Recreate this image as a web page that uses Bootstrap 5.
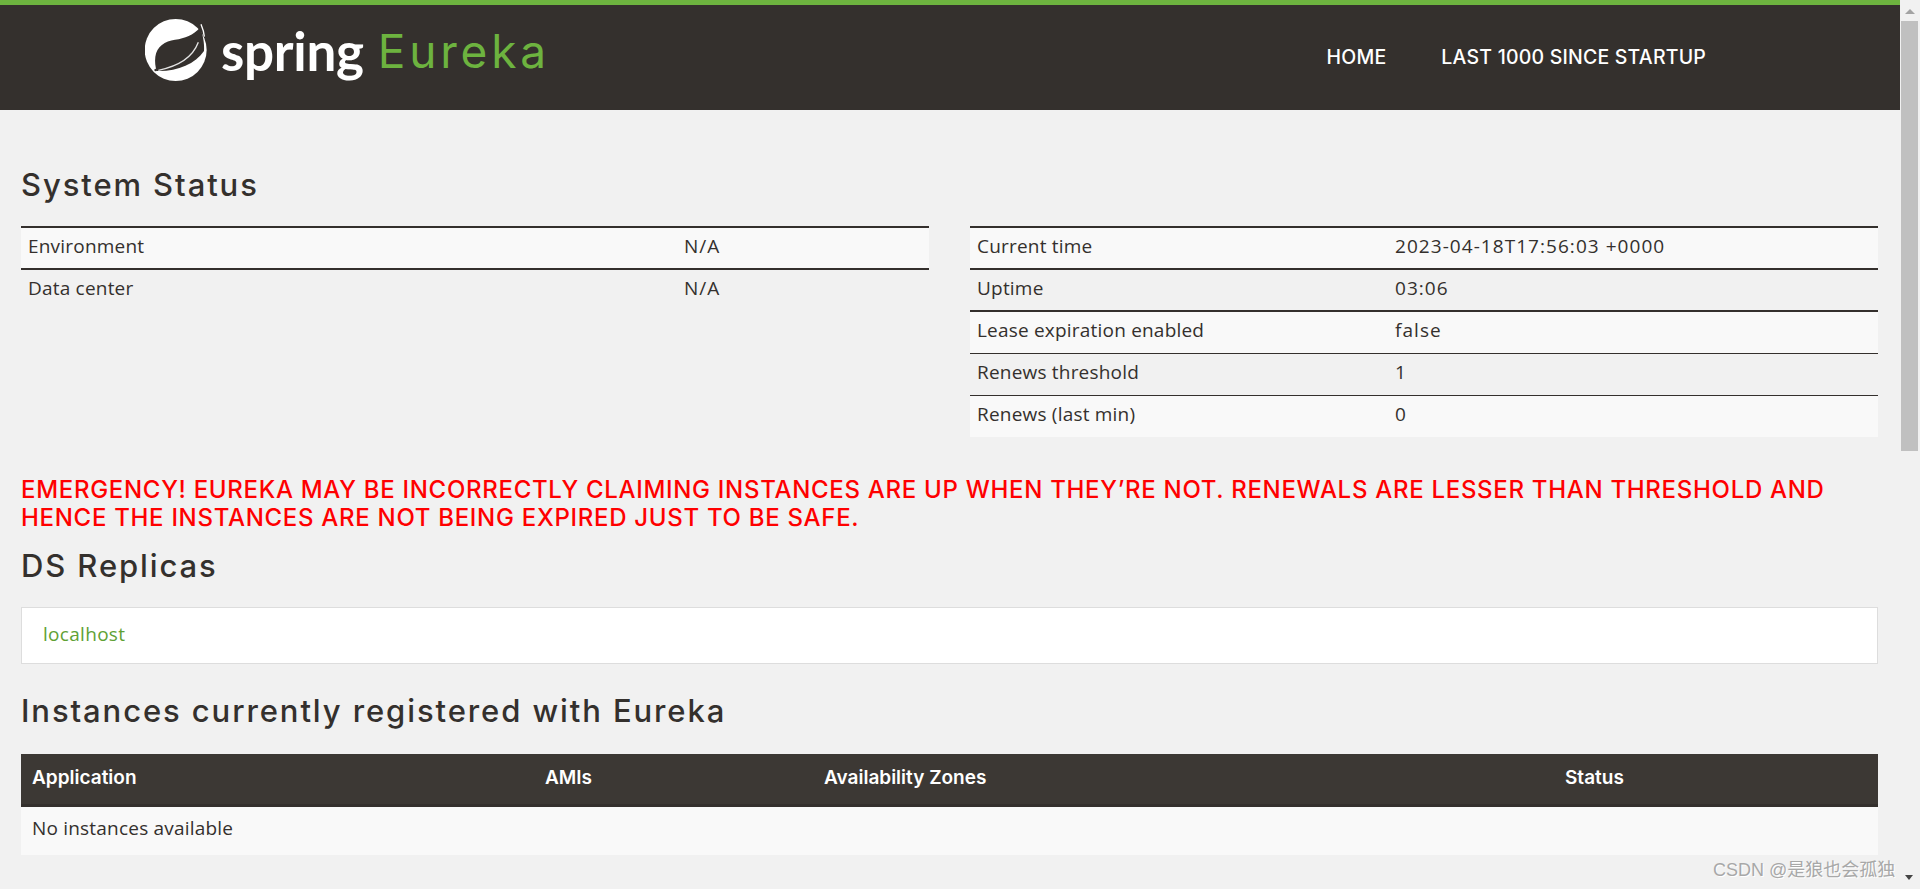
<!DOCTYPE html>
<html lang="en">
<head>
<meta charset="utf-8">
<title>Eureka</title>
<link href="https://cdn.jsdelivr.net/npm/bootstrap@5.3.0/dist/css/bootstrap.min.css" rel="stylesheet">
<style>
html,body{height:100%;overflow:hidden}
body{background:#f1f1f1;color:#34302d;font-family:"Open Sans","Noto Sans",sans-serif;font-size:19px}
.app-shell{height:889px}
.page-main{min-width:0;overflow:hidden}
.top-head{background:#34302d;border-top:5px solid #6db33f;height:110px;padding:0}
.brand-box{margin-left:145px;padding:0;margin-top:-14px;gap:12px;color:#fff;text-decoration:none}
.brand-spring{font-family:"Lato",sans-serif;font-weight:700;font-size:53px;line-height:1;color:#fff;letter-spacing:-.3px}
.brand-eureka{font-family:"Inter",sans-serif;font-weight:400;font-size:46px;line-height:1;color:#6db33f;letter-spacing:3.8px;margin-left:2px}
.head-links{margin-right:194px;gap:55px;margin-top:0}
.head-links .nav-link{color:#fff;font-family:"Inter",sans-serif;font-weight:500;font-size:19.5px;letter-spacing:.2px;padding:0}
.page-body{padding:0 22px 0 21px}
.sec-title{font-family:"Inter",sans-serif;font-weight:500;font-size:31px;line-height:36px;letter-spacing:1.9px;color:#34302d;margin:0}
.title-first{margin-top:57px;margin-bottom:23px}
.status-row{--bs-gutter-x:41px}
.status-tbl{--bs-table-bg:transparent;--bs-table-color:#34302d;color:#34302d;margin:0;font-size:19px;letter-spacing:.2px}
.status-tbl td{padding:5px 7px 9px;height:42px;line-height:26px;border:0;border-top:1px solid #34302d;background:transparent}
.status-tbl td+td{letter-spacing:1.05px}
.status-tbl tr:nth-child(odd) td{background:#f9f9f9}
.status-tbl tr.thick td{border-top-width:2px}
.col-left-a{width:656px}
.col-right-a{width:418px}
.alert-line{color:#f00;text-transform:uppercase;font-family:"Inter",sans-serif;font-weight:500;font-size:24px;letter-spacing:.7px;line-height:28px;margin:39px 0 0}
.title-ds{margin-top:16px;margin-bottom:23px}
.replica-box{background:#fff;border:1px solid #ddd;height:57px;padding:0 21px 2px;display:flex;align-items:center;color:#5fa134;text-decoration:none;font-size:19px;letter-spacing:.3px}
.title-inst{margin-top:29px;margin-bottom:25px}
.inst-tbl{margin:0;font-size:19px;--bs-table-bg:transparent;color:#34302d}
.inst-tbl th{background:#3c3834;color:#fff;font-family:"Inter",sans-serif;font-weight:600;font-size:19px;height:51px;padding:0 11px 2px;vertical-align:middle;border:0;border-bottom:3px solid #34302d}
.inst-tbl td{background:#f9f9f9;height:50px;padding:0 11px 6px;vertical-align:middle;border:0;color:#34302d;letter-spacing:.2px}
.col-i1{width:513px}.col-i2{width:279px}.col-i3{width:741px}
.title-gen{margin-top:29px}
.fake-scroll{width:20px;background:#f1f1f1}
.scroll-arrow{width:0;height:0;border-left:5px solid transparent;border-right:5px solid transparent;border-bottom:5px solid #a3a3a3;margin:9px auto 7px}
.scroll-thumb{width:17px;height:430px;background:#c0c0c0;margin-left:1px}
.mark-note{position:absolute;left:1713px;top:858px;font-family:"Liberation Sans","Noto Sans CJK SC",sans-serif;font-size:18px;line-height:24px;color:#a8a8a8;text-shadow:1px 1px 0 #fff}
.mark-caret{position:absolute;left:1905px;top:875px;width:0;height:0;border-left:4px solid transparent;border-right:4px solid transparent;border-top:5px solid #444}
</style>
</head>
<body>
<div class="d-flex app-shell position-relative">
  <div class="page-main flex-grow-1">
    <nav class="navbar top-head justify-content-between flex-nowrap">
      <a class="navbar-brand d-flex align-items-center brand-box" href="#">
        <svg width="64" height="64" viewBox="15 12 192 192" aria-hidden="true">
          <circle cx="107" cy="105" r="93" fill="#fff"/>
          <path d="M180 38C160 60 135 70 105 74C75 78 50 95 46 125C44 140 46 155 50 168C110 170 165 148 192 108C194 85 188 55 180 38Z" fill="#34302d"/>
          <path d="M183 28C188 40 192 50 193 65" fill="none" stroke="#fff" stroke-width="4"/>
          <path d="M55 166C100 157 155 135 175 82" fill="none" stroke="#e4e4e4" stroke-width="4"/>
          <circle cx="47" cy="165" r="4" fill="#34302d"/>
        </svg>
        <span class="brand-spring">spring</span><span class="brand-eureka">Eureka</span>
      </a>
      <ul class="navbar-nav flex-row head-links">
        <li class="nav-item"><a class="nav-link" href="#">HOME</a></li>
        <li class="nav-item"><a class="nav-link" href="#">LAST 1000 SINCE STARTUP</a></li>
      </ul>
    </nav>
    <div class="page-body">
      <h1 class="sec-title title-first">System Status</h1>
      <div class="row status-row">
        <div class="col-6">
          <table class="table status-tbl">
            <tbody>
              <tr class="thick"><td class="col-left-a">Environment</td><td>N/A</td></tr>
              <tr class="thick"><td>Data center</td><td>N/A</td></tr>
            </tbody>
          </table>
        </div>
        <div class="col-6">
          <table class="table status-tbl">
            <tbody>
              <tr class="thick"><td class="col-right-a">Current time</td><td>2023-04-18T17:56:03 +0000</td></tr>
              <tr class="thick"><td>Uptime</td><td>03:06</td></tr>
              <tr class="thick"><td>Lease expiration enabled</td><td>false</td></tr>
              <tr><td>Renews threshold</td><td>1</td></tr>
              <tr><td>Renews (last min)</td><td>0</td></tr>
            </tbody>
          </table>
        </div>
      </div>
      <h4 class="alert-line">Emergency! Eureka may be incorrectly claiming instances are up when they’re not. Renewals are lesser than threshold and hence the instances are not being expired just to be safe.</h4>
      <h1 class="sec-title title-ds">DS Replicas</h1>
      <a class="replica-box" href="#">localhost</a>
      <h1 class="sec-title title-inst">Instances currently registered with Eureka</h1>
      <table class="table inst-tbl">
        <thead><tr><th class="col-i1">Application</th><th class="col-i2">AMIs</th><th class="col-i3">Availability Zones</th><th>Status</th></tr></thead>
        <tbody><tr><td colspan="4">No instances available</td></tr></tbody>
      </table>
      <h1 class="sec-title title-gen">General Info</h1>
    </div>
  </div>
  <div class="fake-scroll flex-shrink-0">
    <div class="scroll-arrow"></div>
    <div class="scroll-thumb"></div>
  </div>
  <div class="mark-note">CSDN @是狼也会孤独</div>
  <div class="mark-caret"></div>
</div>
<script src="https://cdn.jsdelivr.net/npm/bootstrap@5.3.0/dist/js/bootstrap.bundle.min.js"></script>
</body>
</html>
